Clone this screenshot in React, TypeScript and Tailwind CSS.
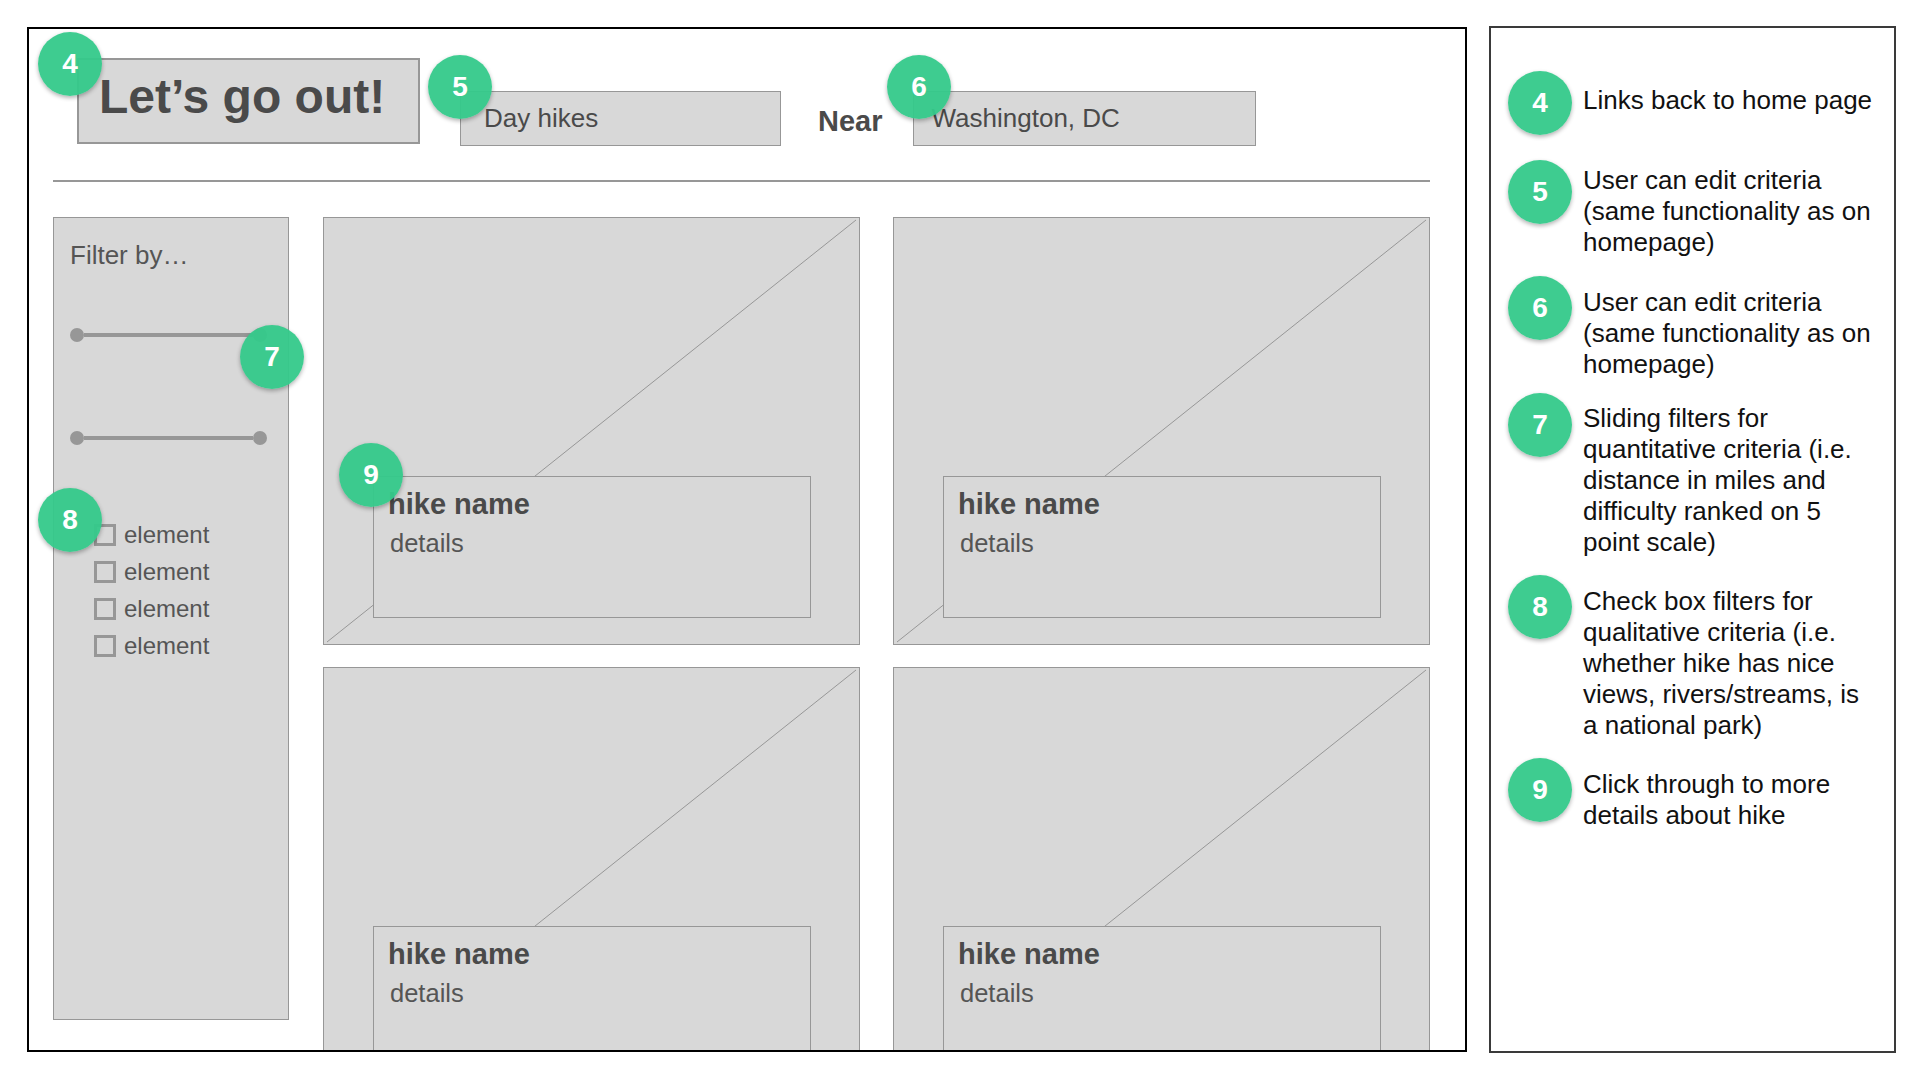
import type { ReactNode } from "react";

const notes = [
  { n: 4, row: "mt-[43px]", text: "mt-[14px]", lines: ["Links back to home page"] },
  {
    n: 5,
    row: "mt-[25px]",
    text: "mt-[5px]",
    lines: ["User can edit criteria", "(same functionality as on", "homepage)"]
  },
  {
    n: 6,
    row: "mt-[18px]",
    text: "mt-[11px]",
    lines: ["User can edit criteria", "(same functionality as on", "homepage)"]
  },
  {
    n: 7,
    row: "mt-[13px]",
    text: "mt-[10px]",
    lines: [
      "Sliding filters for",
      "quantitative criteria (i.e.",
      "distance in miles and",
      "difficulty ranked on 5",
      "point scale)"
    ]
  },
  {
    n: 8,
    row: "mt-[17px]",
    text: "mt-[11px]",
    lines: [
      "Check box filters for",
      "qualitative criteria (i.e.",
      "whether hike has nice",
      "views, rivers/streams, is",
      "a national park)"
    ]
  },
  {
    n: 9,
    row: "mt-[17px]",
    text: "mt-[11px]",
    lines: ["Click through to more", "details about hike"]
  }
];

function Badge({ n, className = "" }: { n: number; className?: string }) {
  return (
    <div
      className={`flex h-[64px] w-[64px] shrink-0 items-center justify-center rounded-full bg-[#34c98a]/95 text-[28px] leading-none font-bold text-white shadow-[0_2px_4px_rgba(0,0,0,0.3)] ${className}`}
    >
      {n}
    </div>
  );
}

function Slider({ className }: { className: string }) {
  return (
    <div className={`flex w-[197px] items-center ${className}`}>
      <span className="h-[14px] w-[14px] rounded-full bg-[#979797]" />
      <span className="h-[4px] flex-1 bg-[#979797]" />
      <span className="h-[14px] w-[14px] rounded-full bg-[#979797]" />
    </div>
  );
}

function HikeCard() {
  return (
    <div className="relative h-[428px] w-[537px] border border-[#979797] bg-[#d8d8d8] pl-[49px] pt-[258px]">
      <svg
        className="absolute inset-0 h-full w-full"
        viewBox="0 0 535 426"
        preserveAspectRatio="none"
      >
        <line x1="3" y1="424" x2="532" y2="2" stroke="#979797" strokeWidth="1" />
      </svg>
      <div className="relative h-[142px] w-[438px] border border-[#979797] bg-[#d8d8d8] pl-[14px] pt-[11px]">
        <p className="text-[29px] leading-[33px] font-bold text-[#4a4a4a]">hike name</p>
        <p className="mt-[8px] pl-[2px] text-[25.5px] leading-[29px] text-[#555]">details</p>
      </div>
    </div>
  );
}

function InputBox({ children, className }: { children: ReactNode; className: string }) {
  return (
    <div
      className={`flex h-[55px] items-center border border-[#979797] bg-[#d8d8d8] text-[26px] text-[#4a4a4a] ${className}`}
    >
      {children}
    </div>
  );
}

export default function App() {
  return (
    <div className="flex h-[1080px] w-[1920px] items-start gap-[22px] overflow-hidden bg-white pl-[27px] pt-[26px] font-['Liberation_Sans',Arial,sans-serif]">
      <div className="relative mt-[1px] h-[1025px] w-[1440px] shrink-0 overflow-hidden border-2 border-black pl-[24px]">
        <header className="flex items-start pl-[24px] pt-[29px]">
          <div className="h-[86px] w-[343px] border-2 border-[#979797] bg-[#d8d8d8] pl-[20px] pt-[13px] text-[48px] leading-none font-bold text-[#4a4a4a]">
            Let’s go out!
          </div>
          <InputBox className="ml-[40px] mt-[33px] w-[321px] pl-[23px]">Day hikes</InputBox>
          <div className="ml-[37px] mt-[33px] flex h-[55px] items-center pt-[6px] text-[29px] font-bold text-[#4a4a4a]">
            Near
          </div>
          <InputBox className="ml-[30px] mt-[33px] w-[343px] pl-[18px]">Washington, DC</InputBox>
        </header>

        <div className="mt-[34px] h-[2px] w-[1377px] bg-[#979797]" />

        <div className="mt-[35px] flex items-start gap-[34px]">
          <aside className="h-[803px] w-[236px] shrink-0 border border-[#979797] bg-[#d8d8d8] pl-[16px] pt-[23px]">
            <p className="text-[26px] leading-[29px] text-[#555]">Filter by…</p>
            <Slider className="mt-[58px]" />
            <Slider className="mt-[89px]" />
            <div className="mt-[71px] ml-[24px]">
              {["element", "element", "element", "element"].map((label, i) => (
                <div key={i} className="flex h-[37px] items-center gap-[8px]">
                  <span className="h-[22px] w-[22px] border-[3px] border-[#979797]" />
                  <span className="text-[24px] text-[#555]">{label}</span>
                </div>
              ))}
            </div>
          </aside>

          <div className="grid grid-cols-[537px_537px] gap-x-[33px] gap-y-[22px]">
            <HikeCard />
            <HikeCard />
            <HikeCard />
            <HikeCard />
          </div>
        </div>

        <Badge n={4} className="absolute left-[9px] top-[3px] z-10" />
        <Badge n={5} className="absolute left-[399px] top-[26px] z-10" />
        <Badge n={6} className="absolute left-[858px] top-[26px] z-10" />
        <Badge n={7} className="absolute left-[211px] top-[296px] z-10" />
        <Badge n={8} className="absolute left-[9px] top-[459px] z-10" />
        <Badge n={9} className="absolute left-[310px] top-[414px] z-10" />
      </div>

      <div className="flex h-[1027px] w-[407px] shrink-0 flex-col border-2 border-[#3a3a3a] pl-[17px]">
        {notes.map((note) => (
          <div key={note.n} className={`flex items-start gap-[11px] ${note.row}`}>
            <Badge n={note.n} />
            <div className={`text-[26px] leading-[31px] whitespace-nowrap text-[#111] ${note.text}`}>
              {note.lines.map((line) => (
                <div key={line}>{line}</div>
              ))}
            </div>
          </div>
        ))}
      </div>
    </div>
  );
}
